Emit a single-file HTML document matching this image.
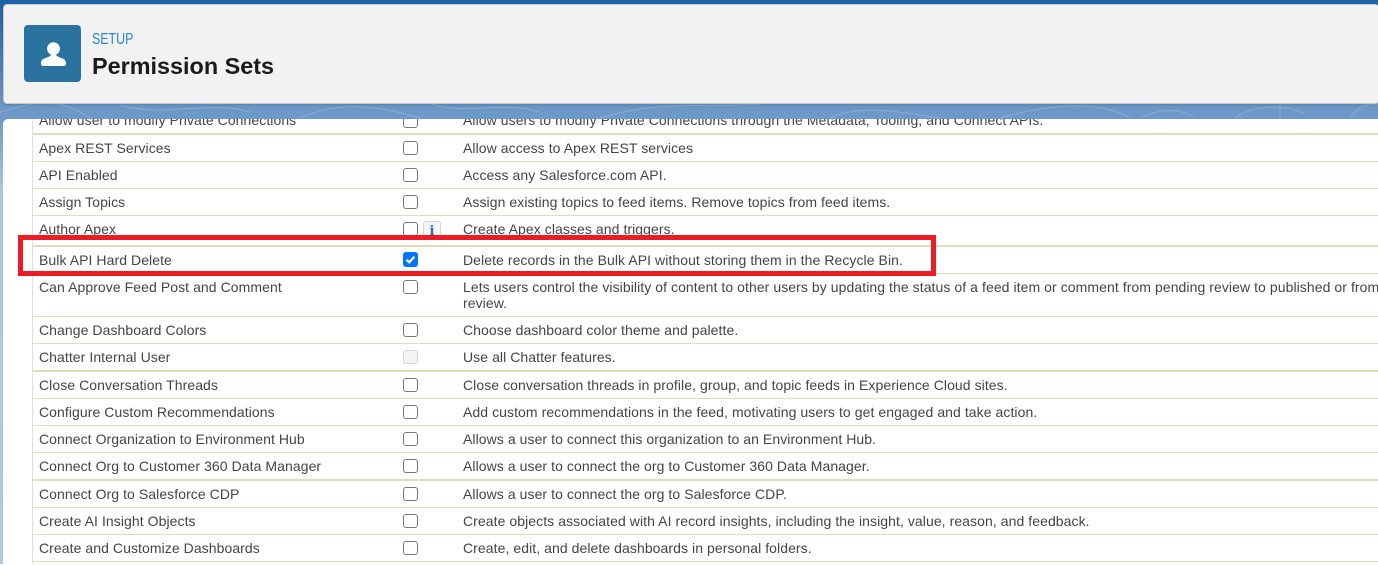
<!DOCTYPE html>
<html><head><meta charset="utf-8"><style>
html,body{margin:0;padding:0;width:1378px;height:566px;overflow:hidden;background:#fff}
body{position:relative;font-family:"Liberation Sans",Arial,sans-serif}
.a{position:absolute}
#bg{left:0;top:0;width:1378px;height:566px;background:linear-gradient(#1d61a6 0,#1f63a6 5px,#6b97c6 108px,#7099c8 119px,#a9c4e4 190px,#afc8e6 566px)}
#panel{left:3px;top:119px;width:1375px;height:445px;background:#fff;border-radius:5px 0 0 0}
#bot{left:0;top:564px;width:1378px;height:2px;background:#fff}
#head{left:3px;top:4px;width:1375px;height:98px;background:#f2f2f2;border:1px solid #c9c9c9;border-right:0;border-radius:4px;box-sizing:content-box;box-shadow:0 1px 2px rgba(0,0,0,.15)}
#ic{left:24px;top:25px;width:57px;height:57px;background:#2a739f;border-radius:4px}
#setup{left:92px;top:31px;font-size:15.5px;line-height:18px;color:#2b85d0;transform:scaleX(.8);transform-origin:0 0}
#title{left:92px;top:51px;font-size:23.4px;line-height:30px;font-weight:bold;color:#1a1a1a}
.v{left:32px;top:119px;width:1px;height:445px;background:#d8dfe8}
.l{left:33px;width:1345px;height:1px;background:#e3dcb8}
.l.t{height:2px}
.n,.d{position:absolute;font-size:14px;letter-spacing:.07px;line-height:16px;color:#444;white-space:nowrap}
.n{left:39px}.d{left:463px}
.c{position:absolute;left:403px;width:15px;height:14px;box-sizing:border-box;border:1px solid #767676;border-radius:3px;background:#fff}
.c.dis{border-color:#d4d4d4;background:#f3f3f3}
.c.on{background:#0075ff;border:0}
#clip{left:0;top:119px;width:1378px;height:445px;overflow:hidden}
#info{left:423px;top:221px;width:18px;height:19px;box-sizing:border-box;border:1px solid #d0d5da;border-radius:3px;background:#f4f6f8;font:bold 13px/20px "DejaVu Serif",serif;color:#1f6fc4;text-align:center}
#red{left:18px;top:235px;width:918px;height:41px;box-sizing:border-box;border:5px solid #ed1c24}
</style></head><body>
<div class="a" id="bg">
<svg width="1378" height="120" style="position:absolute;left:0;top:0" fill="none" stroke="#fff" stroke-opacity=".22" stroke-width="1">
<path d="M0 112C40 100 60 98 90 118M120 105C160 118 210 100 250 112M300 118C340 100 380 106 420 118M432 104C470 116 500 100 540 112M600 118C660 100 700 108 760 104M830 118C860 104 900 112 940 118M1000 118C1050 104 1100 100 1130 118M1140 118c20-10 40-10 55 0M1235 118c20-14 50-14 70-4M1280 105v13M1350 118c10-14 20-14 28-14"/>
</svg>
</div>
<div class="a" id="panel"></div>
<div class="a" id="clip">
<div class="a" style="left:0;top:-119px;width:1378px;height:566px">
<div class="a v"></div>
<div class="n" style="top:112px">Allow user to modify Private Connections</div>
<div class="c" style="top:114px"></div>
<div class="d" style="top:112px">Allow users to modify Private Connections through the Metadata, Tooling, and Connect APIs.</div>
<div class="a l t" style="top:133px"></div>

<div class="n" style="top:140px">Apex REST Services</div><div class="c" style="top:141px"></div><div class="d" style="top:140px">Allow access to Apex REST services</div>
<div class="a l" style="top:161px"></div>
<div class="n" style="top:167px">API Enabled</div><div class="c" style="top:168px"></div><div class="d" style="top:167px">Access any Salesforce.com API.</div>
<div class="a l" style="top:188px"></div>
<div class="n" style="top:194px">Assign Topics</div><div class="c" style="top:195px"></div><div class="d" style="top:194px">Assign existing topics to feed items. Remove topics from feed items.</div>
<div class="a l" style="top:215px"></div>
<div class="n" style="top:221px">Author Apex</div><div class="c" style="top:222px"></div><div class="a" id="info">i</div><div class="d" style="top:221px">Create Apex classes and triggers.</div>
<div class="a l t" style="top:245px"></div>
<div class="n" style="top:252px">Bulk API Hard Delete</div>
<div class="c on" style="top:252px;height:15px"><svg width="15" height="15" viewBox="0 0 15 15" style="display:block"><path d="M3.600 7.800 6.200 10.300 11.400 4.700" fill="none" stroke="#fff" stroke-width="2.200"/></svg></div>
<div class="d" style="top:252px">Delete records in the Bulk API without storing them in the Recycle Bin.</div>
<div class="a l" style="top:273px"></div>
<div class="n" style="top:279px">Can Approve Feed Post and Comment</div><div class="c" style="top:280px"></div>
<div class="d" style="top:279px">Lets users control the visibility of content to other users by updating the status of a feed item or comment from pending review to published or from published to pending</div>
<div class="d" style="top:295px">review.</div>
<div class="a l" style="top:316px"></div>
<div class="n" style="top:322px">Change Dashboard Colors</div><div class="c" style="top:323px"></div><div class="d" style="top:322px">Choose dashboard color theme and palette.</div>
<div class="a l" style="top:343px"></div>
<div class="n" style="top:349px">Chatter Internal User</div><div class="c dis" style="top:350px"></div><div class="d" style="top:349px">Use all Chatter features.</div>
<div class="a l t" style="top:370px"></div>
<div class="n" style="top:377px">Close Conversation Threads</div><div class="c" style="top:378px"></div><div class="d" style="top:377px">Close conversation threads in profile, group, and topic feeds in Experience Cloud sites.</div>
<div class="a l" style="top:398px"></div>
<div class="n" style="top:404px">Configure Custom Recommendations</div><div class="c" style="top:405px"></div><div class="d" style="top:404px">Add custom recommendations in the feed, motivating users to get engaged and take action.</div>
<div class="a l" style="top:425px"></div>
<div class="n" style="top:431px">Connect Organization to Environment Hub</div><div class="c" style="top:432px"></div><div class="d" style="top:431px">Allows a user to connect this organization to an Environment Hub.</div>
<div class="a l" style="top:452px"></div>
<div class="n" style="top:458px">Connect Org to Customer 360 Data Manager</div><div class="c" style="top:459px"></div><div class="d" style="top:458px">Allows a user to connect the org to Customer 360 Data Manager.</div>
<div class="a l t" style="top:479px"></div>
<div class="n" style="top:486px">Connect Org to Salesforce CDP</div><div class="c" style="top:487px"></div><div class="d" style="top:486px">Allows a user to connect the org to Salesforce CDP.</div>
<div class="a l" style="top:507px"></div>
<div class="n" style="top:513px">Create AI Insight Objects</div><div class="c" style="top:514px"></div><div class="d" style="top:513px">Create objects associated with AI record insights, including the insight, value, reason, and feedback.</div>
<div class="a l" style="top:534px"></div>
<div class="n" style="top:540px">Create and Customize Dashboards</div><div class="c" style="top:541px"></div><div class="d" style="top:540px">Create, edit, and delete dashboards in personal folders.</div>
<div class="a l" style="top:561px"></div>
</div>
</div>
<div class="a" id="bot"></div>
<div class="a" id="head"></div>
<div class="a" id="ic"><svg width="57" height="57" viewBox="0 0 57 57" style="display:block"><path d="M17 38.500c0-3 1.500-4.500 4-5.300 3-1 5-1.700 6-3.200h5c1 1.500 3 2.200 6 3.200 2.500.8 4 2.300 4 5.300 0 1.600-1 2.500-2.500 2.500h-20C18 41 17 40.100 17 38.500z" fill="#fff"/><circle cx="29.500" cy="23.700" r="6.400" fill="#fff"/></svg></div>
<div class="a" id="setup">SETUP</div>
<div class="a" id="title">Permission Sets</div>
<div class="a" id="red"></div>
</body></html>
